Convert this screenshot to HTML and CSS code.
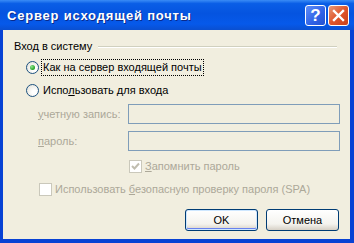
FILE: index.html
```html
<!DOCTYPE html>
<html lang="ru">
<head>
<meta charset="UTF-8">
<title>Сервер исходящей почты</title>
<link rel="stylesheet" href="styles.css">
</head>
<body>
<div class="window">
    <div class="titlebar">
        <span class="title">Сервер исходящей почты</span>
        <div class="caption-buttons">
            <span class="cap-btn help">?</span>
            <span class="cap-btn close">
                <svg width="13" height="13" viewBox="0 0 13 13"><path d="M2 2 L11 11 M11 2 L2 11" stroke="#fff" stroke-width="2.4" stroke-linecap="square"/></svg>
            </span>
        </div>
    </div>
    <div class="client">
        <div class="group-head">
            <span>Вход в систему</span>
            <span class="sep"></span>
        </div>
        <div class="radio-row first">
            <span class="radio checked"><span class="dot"></span></span>
            <span class="focus">Как на сервер входящей почты</span>
        </div>
        <div class="radio-row">
            <span class="radio"></span>
            <span class="lbl">Испо<u>л</u>ьзовать для входа</span>
        </div>
        <div class="field-row">
            <span class="field-label"><u>у</u>четную запись:</span>
            <span class="field"></span>
        </div>
        <div class="field-row">
            <span class="field-label"><u>п</u>ароль:</span>
            <span class="field"></span>
        </div>
        <div class="check-row remember">
            <span class="check">
                <svg width="9" height="9" viewBox="0 0 9 9"><path d="M1 4 L3.5 6.5 L8 1.5" fill="none" stroke="#c0bdaf" stroke-width="2"/></svg>
            </span>
            <span class="disabled"><u>З</u>апомнить пароль</span>
        </div>
        <div class="check-row spa">
            <span class="check"></span>
            <span class="disabled">Использовать <u>б</u>езопасную проверку пароля (SPA)</span>
        </div>
        <div class="buttons">
            <span class="btn default">OK</span>
            <span class="btn">Отмена</span>
        </div>
    </div>
</div>
</body>
</html>
```

FILE: styles.css
```css
/* XP style dialog */
body {
    margin: 0;
    padding: 0;
    font-family: "Liberation Sans", Arial, sans-serif;
    font-size: 11px;
    color: #000;
}
.window {
    width: 354px;
    height: 243px;
    box-sizing: border-box;
    display: flex;
    flex-direction: column;
    background: #0842d4;
    padding: 0 4px 4px 3px;
}
.titlebar {
    height: 30px;
    margin: 0 -4px 0 -3px;
    padding: 0 5px 0 7px;
    display: flex;
    align-items: center;
    justify-content: space-between;
    background: linear-gradient(#3a8cf6 0%, #0a5ee6 12%, #0554e0 45%, #0659ea 80%, #0a4fd0 100%);
    box-sizing: border-box;
}
.title {
    color: #fff;
    font-weight: bold;
    font-size: 13px;
    letter-spacing: 0.8px;
    text-shadow: 1px 1px 0 #0a2a8a;
    margin-top: 1px;
}
.caption-buttons {
    display: flex;
    gap: 2px;
    margin-top: 1px;
}
.cap-btn {
    width: 21px;
    height: 21px;
    box-sizing: border-box;
    border: 1px solid #fff;
    border-radius: 3px;
    display: flex;
    align-items: center;
    justify-content: center;
    color: #fff;
}
.help {
    background: linear-gradient(135deg, #5f8df8, #2f62e6 60%, #2451d0);
    font-weight: bold;
    font-size: 17px;
    font-family: "Liberation Sans", Arial, sans-serif;
}
.close {
    background: linear-gradient(135deg, #e89a78, #e0562c 50%, #c8401a);
}
.client {
    flex: 1;
    background: #f1eedf;
    display: flex;
    flex-direction: column;
    padding: 0 13px 0 11px;
}
.group-head {
    display: flex;
    align-items: center;
    height: 13px;
    margin-top: 9px;
}
.sep {
    flex: 1;
    height: 0;
    border-top: 1px solid #d0d0bf;
    border-bottom: 1px solid #fff;
    margin-left: 6px;
    margin-top: 2px;
}
.radio-row {
    display: flex;
    align-items: center;
    padding-left: 12px;
    height: 18px;
    margin-top: 5px;
}
.radio-row.first {
    margin-top: 6px;
}
.radio {
    width: 13px;
    height: 13px;
    box-sizing: border-box;
    border-radius: 50%;
    border: 1px solid #1c5180;
    background: radial-gradient(circle at 65% 65%, #fff 20%, #e4e2d8 90%);
    display: flex;
    align-items: center;
    justify-content: center;
    margin-right: 2px;
}
.dot {
    width: 5px;
    height: 5px;
    border-radius: 50%;
    background: radial-gradient(circle at 35% 35%, #8fe58f, #21a121 70%);
}
.focus {
    border: 1px dotted #000;
    padding: 1px 1px 2px 1px;
}
.lbl {
    padding: 0 2px;
}
.field-row {
    display: flex;
    align-items: center;
    margin-top: 4px;
    height: 21px;
}
.field-row + .field-row {
    margin-top: 6px;
}
.field-label {
    width: 90px;
    padding-left: 24px;
    color: #aca899;
}
.field {
    flex: 1;
    height: 20px;
    box-sizing: border-box;
    border: 1px solid #7f9db9;
    margin-right: -3px;
}
.check-row {
    display: flex;
    align-items: center;
    height: 14px;
}
.remember {
    padding-left: 115px;
    margin-top: 8px;
}
.spa {
    padding-left: 25px;
    margin-top: 9px;
}
.check {
    width: 13px;
    height: 13px;
    box-sizing: border-box;
    border: 1px solid #cac8bb;
    background: #fff;
    display: flex;
    align-items: center;
    justify-content: center;
    margin-right: 3px;
}
.disabled {
    color: #aca899;
}
.buttons {
    display: flex;
    justify-content: flex-end;
    gap: 8px;
    margin-top: 13px;
    margin-right: -2px;
}
.btn {
    width: 73px;
    height: 22px;
    box-sizing: border-box;
    border: 1px solid #003c74;
    border-radius: 3px;
    background: linear-gradient(#fff, #f4f3ee 70%, #d6d0c5);
    display: flex;
    align-items: center;
    justify-content: center;
}
.btn.default {
    box-shadow: inset 0 0 0 1px #cee7ff, inset 0 -1px 0 1px #6982ee;
}
```
